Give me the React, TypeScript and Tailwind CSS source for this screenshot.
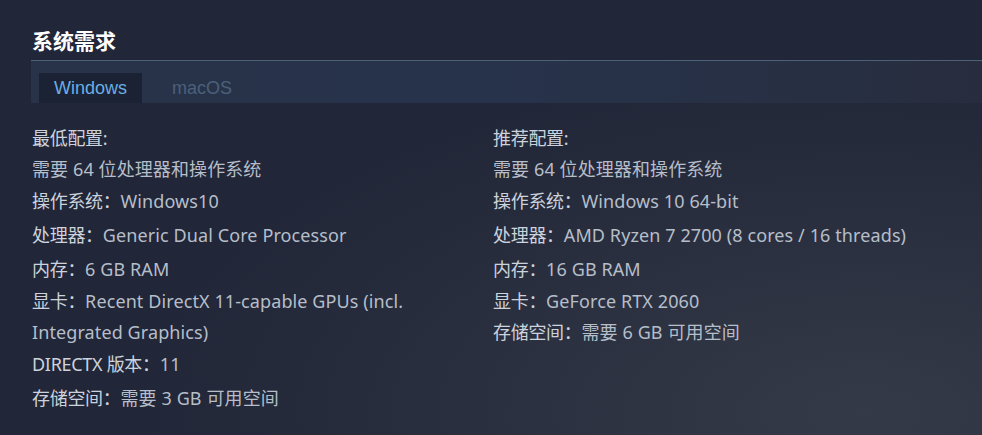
import React from 'react';

type Row = { label?: string; value: string; h: string };

const minRows: Row[] = [
  { label: '最低配置:', value: '', h: 'h-[31px]' },
  { value: '需要 64 位处理器和操作系统', h: 'h-[30px]' },
  { label: '操作系统：', value: 'Windows10', h: 'h-[34px]' },
  { label: '处理器：', value: 'Generic Dual Core Processor', h: 'h-[34px]' },
  { label: '内存：', value: '6 GB RAM', h: 'h-[34px]' },
  { label: '显卡：', value: 'Recent DirectX 11-capable GPUs (incl.', h: 'h-[31px]' },
  { value: 'Integrated Graphics)', h: 'h-[30px]' },
  { label: 'DIRECTX 版本：', value: '11', h: 'h-[34px]' },
  { label: '存储空间：', value: '需要 3 GB 可用空间', h: 'h-[34px]' },
];

const recRows: Row[] = [
  { label: '推荐配置:', value: '', h: 'h-[31px]' },
  { value: '需要 64 位处理器和操作系统', h: 'h-[30px]' },
  { label: '操作系统：', value: 'Windows 10 64-bit', h: 'h-[34px]' },
  { label: '处理器：', value: 'AMD Ryzen 7 2700 (8 cores / 16 threads)', h: 'h-[34px]' },
  { label: '内存：', value: '16 GB RAM', h: 'h-[34px]' },
  { label: '显卡：', value: 'GeForce RTX 2060', h: 'h-[31px]' },
  { label: '存储空间：', value: '需要 6 GB 可用空间', h: 'h-[30px]' },
];

function SpecList({ rows }: { rows: Row[] }) {
  return (
    <ul className="flex flex-col">
      {rows.map((r, i) => (
        <li key={i} className={`${r.h} flex items-center whitespace-nowrap text-[18px]`}>
          {r.label && <span className="text-[#ccd3dd] tracking-[-0.3px]">{r.label}</span>}
          {r.value && <span className="text-[#b6bec9] tracking-[0.1px]">{r.value}</span>}
        </li>
      ))}
    </ul>
  );
}

export default function App() {
  return (
    <div
      className="w-[982px] h-[435px] overflow-hidden bg-[#212638] bg-[radial-gradient(ellipse_at_88%_95%,#353a48_0%,#2b3040_30%,#212638_60%)] pt-[27px] pl-[31px]"
      style={{ fontFamily: '"Noto Sans", "Noto Sans CJK SC", sans-serif' }}
    >
      <h2 className="text-[21px] font-bold text-white leading-[29px] pl-[1px]">系统需求</h2>
      <div className="mt-[4px] border-t border-[#4c6178] bg-[linear-gradient(90deg,#283349_0%,#27334b_50%,#272d3e_100%)] h-[43px] flex items-end pl-[8px]">
        <div
          className="h-[30px] w-[103px] bg-[#1b2233] flex items-center justify-center text-[18px] text-[#6aaee6]"
          style={{ fontFamily: '"Liberation Sans", Arial, sans-serif' }}
        >
          Windows
        </div>
        <div
          className="h-[30px] ml-[30px] flex items-center text-[18px] text-[#4c6079]"
          style={{ fontFamily: '"Liberation Sans", Arial, sans-serif' }}
        >
          macOS
        </div>
      </div>
      <div className="mt-[20px] flex pl-[1px]">
        <div className="w-[461px]">
          <SpecList rows={minRows} />
        </div>
        <div>
          <SpecList rows={recRows} />
        </div>
      </div>
    </div>
  );
}
